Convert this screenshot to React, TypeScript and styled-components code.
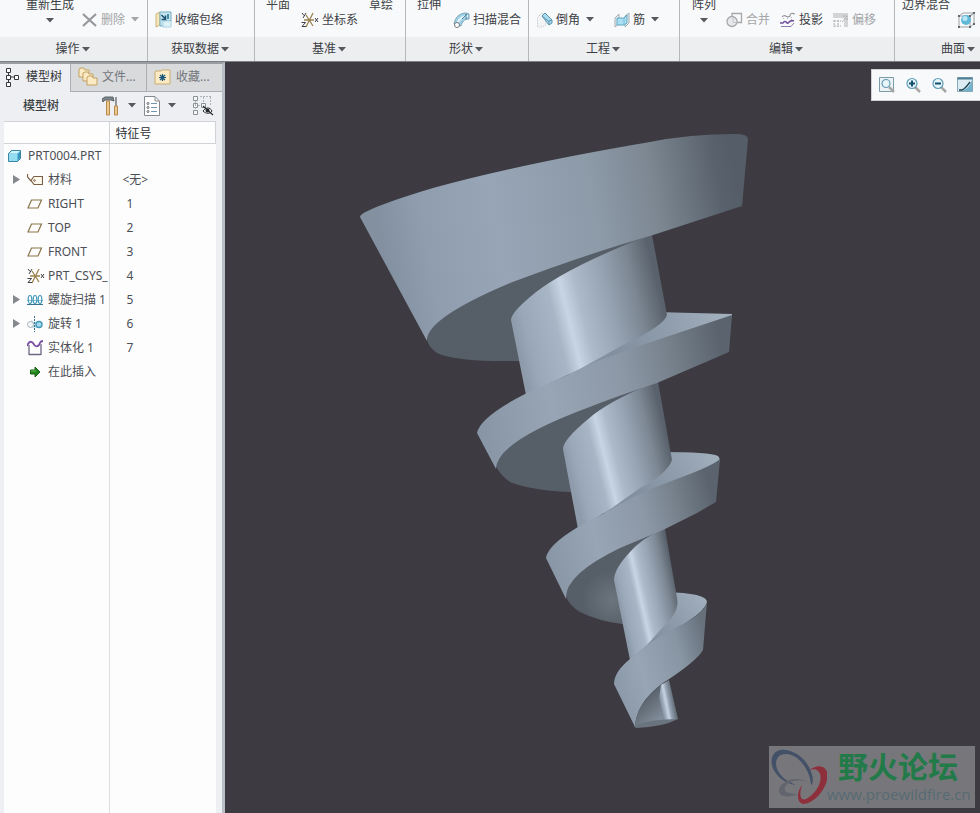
import React from "react";
import styled, { createGlobalStyle } from "styled-components";

const GlobalStyle = createGlobalStyle`
  * { box-sizing: border-box; }
  body {
    margin: 0;
    font-family: "Noto Sans", "Noto Sans CJK SC", sans-serif;
    font-size: 12px;
    line-height: 18px;
    color: #3c3f45;
    background: #3d3b41;
  }
  button { font: inherit; color: inherit; border: 0; padding: 0; background: none; white-space: nowrap; }
`;

/* ---------- layout ---------- */

const Page = styled.div`
  display: flex;
  flex-direction: column;
  min-height: 100vh;
  overflow: hidden;
`;

const Ribbon = styled.header`
  display: grid;
  grid-template-columns: 148fr 107fr 151fr 123fr 151fr 215fr 85fr;
  border-bottom: 1px solid #7d8086;
  background: #f8f9fa;
`;

const Group = styled.section`
  min-width: 0;
  overflow: hidden;
  border-right: 1px solid #b4b7bc;
  &:last-child { border-right: 0; }
`;

const GroupBody = styled.div<{ $start: number; $gap: number }>`
  display: flex;
  align-items: flex-end;
  gap: ${(p) => p.$gap}px;
  height: 37px;
  padding-left: ${(p) => p.$start}px;
  overflow: hidden;
`;

const GroupTitle = styled.button<{ $wide?: boolean }>`
  display: flex;
  align-items: center;
  justify-content: center;
  gap: 2px;
  width: ${(p) => (p.$wide ? "128px" : "100%")};
  height: 24px;
  padding-right: 2px;
  background: #edeef0;
`;

const TitleBar = styled.div`
  background: #edeef0;
`;

const TallButton = styled.button`
  display: flex;
  flex: none;
  flex-direction: column;
  align-items: center;
  gap: 4px;
  height: 41px;
`;

const SmallButton = styled.button<{ $muted?: boolean }>`
  display: flex;
  flex: none;
  align-items: center;
  gap: 3px;
  height: 36px;
  padding-top: 1px;
  color: ${(p) => (p.$muted ? "#a3a5a8" : "#3c3f45")};
`;

const Main = styled.main`
  display: flex;
  flex: 1;
`;

const Side = styled.aside`
  display: flex;
  flex: none;
  flex-direction: column;
  width: 225px;
  border-top: 2px solid #9b9ea1;
  border-right: 3px solid #b9bec7;
  background: #edeff2;
`;

const Tabs = styled.div`
  display: grid;
  grid-template-columns: 70px 76px 76px;
  height: 28px;
`;

const Tab = styled.button<{ $active?: boolean }>`
  display: flex;
  align-items: center;
  gap: ${(p) => (p.$active ? 5 : 4)}px;
  padding-left: ${(p) => (p.$active ? 5 : 7)}px;
  padding-bottom: ${(p) => (p.$active ? 3 : 2)}px;
  color: ${(p) => (p.$active ? "#33363b" : "#73767b")};
  background: ${(p) => (p.$active ? "#edeff2" : "#d8dadc")};
  border: solid #abaeb2;
  border-width: ${(p) => (p.$active ? "0" : "0 0 1px 1px")};
`;

const TreeBar = styled.div`
  display: flex;
  align-items: center;
  height: 29px;
  padding: 0 8px 2px 23px;
`;

const TreeTitle = styled.h2`
  flex: 1;
  margin: 0;
  font-size: 12px;
  font-weight: 500;
`;

const BarTools = styled.div`
  display: flex;
  align-items: center;
  gap: 8px;
`;

const TreeTable = styled.table`
  flex: 1;
  width: 212px;
  margin-left: 4px;
  height: 692px;
  table-layout: fixed;
  border-collapse: collapse;
  background: #fdfdfe;
  color: #4c4f55;

  th {
    height: 22px;
    padding: 2px 6px 0;
    line-height: 16px;
    border: solid #cfd2d6;
    border-width: 1px 1px 1px 0;
    text-align: left;
    font-weight: 400;
    color: #2d3035;
  }
  td { padding: 0; overflow: hidden; white-space: nowrap; }
  td:first-child { border-right: 1px solid #dcdee1; }
  td:nth-child(2) { padding-left: 17px; }
`;

const NameCol = styled.col`
  width: 105px;
`;

const Row = styled.tr`
  height: 24px;
`;

const SpecialValue = styled.span`
  margin-left: -4px;
`;

const NodeCell = styled.div<{ $root?: boolean }>`
  display: flex;
  align-items: center;
  gap: 4px;
  padding-left: ${(p) => (p.$root ? 4 : 9)}px;
`;

const Toggle = styled.span`
  flex: none;
  width: 8px;
  height: 18px;
  margin-right: 2px;
  display: flex;
  align-items: center;
`;

const Viewport = styled.section`
  position: relative;
  flex: 1;
  min-width: 0;
  overflow: hidden;
  background: #3d3b41;
`;

const Scene = styled.svg`
  display: block;
`;

const FloatBar = styled.div`
  position: absolute;
  top: 7px;
  right: 0;
  display: flex;
  align-items: center;
  gap: 10px;
  height: 32px;
  padding: 0 7px;
  background: #f8f9fb;
  border: 1px solid #cfd1d5;
  border-right: 0;
`;

const Watermark = styled.div`
  position: absolute;
  right: 5px;
  bottom: 5px;
  display: flex;
  width: 206px;
  height: 62px;
  background: #77777b;
`;

const WatermarkText = styled.div`
  display: flex;
  flex-direction: column;
  align-items: flex-start;
  white-space: nowrap;
`;

const WatermarkName = styled.strong`
  padding-left: 11px;
  font-family: "Noto Sans CJK SC", sans-serif;
  font-size: 30px;
  line-height: 38px;
  font-weight: 700;
  color: #237a49;
`;

const WatermarkUrl = styled.span`
  font-family: "Open Sans", "Noto Sans", sans-serif;
  font-size: 15px;
  line-height: 20px;
  color: #566a72;
`;

const IconSvg = styled.svg`
  display: block;
  flex: none;
`;

/* ---------- icons ---------- */

type IconProps = { children: React.ReactNode; w?: number; h?: number };
const Icon = ({ children, w = 16, h = 16 }: IconProps) => (
  <IconSvg width={w} height={h} viewBox={`0 0 ${w} ${h}`} fill="none" aria-hidden="true">
    {children}
  </IconSvg>
);

const Caret = ({ muted }: { muted?: boolean }) => (
  <Icon w={8} h={5}>
    <path d="M0 0H8L4 4.5Z" fill={muted ? "#a3a5a8" : "#55585d"} />
  </Icon>
);

const DeleteIcon = () => (
  <Icon>
    <path d="M1 2L14 14M14 2L1 14" stroke="#96989b" strokeWidth="2.2" />
  </Icon>
);

const ShrinkIcon = () => (
  <Icon w={17} h={17}>
    <path d="M1 3L5 1V14L1 16Z" fill="#f6e6b8" stroke="#cfb47c" />
    <path d="M5 1H16V10H10V15H5Z" fill="#c6e6f0" stroke="#72abc0" />
    <path d="M8 10H16V16H8Z" fill="#def1f7" stroke="#a6d2e0" />
    <path d="M6.500 4L10 7.500M10.500 4.500V8.500H6.500" stroke="#1c4f70" strokeWidth="1.500" />
    <path d="M13 3V8" stroke="#1b6f91" strokeWidth="1.500" />
  </Icon>
);

const CsysIcon = () => (
  <Icon w={18}>
    <path d="M3 8H13M5 3L12 14M12 1L5 15" stroke="#9a8250" strokeWidth="1.300" />
    <path d="M1 1L3 3.500M5 1L2 6M0.500 10.500H4.500L1 14.500H5M14 6L17 10M17 6L14 10" stroke="#3d4045" />
  </Icon>
);

const SweepIcon = () => (
  <Icon w={17}>
    <path d="M1 12C2 6 6 1 13 1L16 2V7C11 7 9 10 8 14Z" fill="#9fd2e8" stroke="#7ba3b6" />
    <path d="M5 10C7 6 10 4 15 4" stroke="#eaf7fc" strokeWidth="2" />
    <path d="M9 7L14 2M13 2V7" stroke="#4d8098" />
    <circle cx="4" cy="13" r="2.500" fill="#fff" stroke="#777c82" />
  </Icon>
);

const ChamferIcon = () => (
  <Icon>
    <path d="M0.500 5.500L4 1.500H9V13L5 15H0.500Z" fill="#f1f3f5" stroke="#c3c8cd" strokeDasharray="1 1" />
    <path d="M5 4L8 1L15 8V11L12 13Z" fill="#a9dcf0" stroke="#5b93ab" />
    <path d="M12 13V9L15 8M5 4L12 9.500" stroke="#5b93ab" />
  </Icon>
);

const RibIcon = () => (
  <Icon>
    <path d="M1 6L5 2V12L1 15ZM11 4L15 1V11L11 15Z" fill="#eef2f4" stroke="#a3acb2" />
    <path d="M3 6H10L13 3V11L10 13H3Z" fill="#a9e0f4" stroke="#5fa4bf" />
    <path d="M10 6V13" stroke="#76bcd6" />
  </Icon>
);

const MergeIcon = () => (
  <Icon w={17}>
    <path d="M6 5V1.500H15.500V10.500H11" stroke="#a6a8ab" strokeWidth="1.300" />
    <circle cx="6" cy="9.500" r="5" fill="#e8e9eb" stroke="#a6a8ab" strokeWidth="1.300" />
    <path d="M7 5.500V10.500H11" stroke="#c3c5c8" />
  </Icon>
);

const ProjectIcon = () => (
  <Icon>
    <path d="M2 5C5 1 7 7 10 4C10 1 12 1 15 2" stroke="#98999e" strokeWidth="1.200" />
    <path d="M3.500 6V8M7.500 6V8M11.500 5V8" stroke="#b6b8bc" strokeDasharray="1 1" />
    <path d="M0 11H3C4 9 6 9 7 11C9 12 9 7 14 9" stroke="#70529d" strokeWidth="1.600" />
    <path d="M1 14.500H11L14 11" stroke="#8f79b1" />
  </Icon>
);

const OffsetIcon = () => (
  <Icon>
    <path d="M0 1H15V15H11V6H0Z" fill="#d2d4d5" />
    <path d="M1 8V15M1 9H8M5 8V15M1 14H8M9 10L14 4M10 4H14V8" stroke="#a9abae" strokeDasharray="2 1" />
  </Icon>
);

const StyleCubeIcon = () => (
  <Icon w={17}>
    <path d="M1 4L5 1H16L12 4ZM12 4L16 1V12L12 15M1 4V15H12V4" stroke="#9da1a5" />
    <circle cx="8" cy="8" r="5" fill="#61b9da" />
    <circle cx="7" cy="6.500" r="2.500" fill="#b8e7f5" />
    <path d="M0 3H2V5H0ZM11 3H13V5H11ZM0 14H2V16H0ZM11 14H13V16H11ZM15 0H17V2H15ZM15 11H17V13H15Z" fill="#62676c" />
  </Icon>
);

const TreeIcon = () => (
  <Icon w={16} h={20}>
    <path d="M3.500 5V16M3.500 10H9" stroke="#33363a" />
    <path d="M1.500 1.500H5.500V5.500H1.500ZM1.500 8.500H5.500V12.500H1.500ZM1.500 15.500H5.500V19.500H1.500ZM9.500 8.500H13.500V12.500H9.500Z" fill="#fff" stroke="#33363a" />
  </Icon>
);

const FoldersIcon = () => (
  <Icon w={20} h={20}>
    {[0, 4, 8].map((o) => (
      <path key={o} d={`M${o + 1} ${o + 10}V${o + 2}L${o + 3} ${o + 1}H${o + 6}L${o + 7} ${o + 3}H${o + 11}V${o + 10}Z`} fill="#fbeac3" stroke="#c3a265" />
    ))}
  </Icon>
);

const FavoritesIcon = () => (
  <Icon w={18}>
    <path d="M1 15V3L2 2H7L8 1H16V15Z" fill="#fbeac3" stroke="#c9ac72" />
    <path d="M8.500 5V12M5 8.500H12M6 6L11 11M11 6L6 11" stroke="#18567a" strokeWidth="1.200" />
  </Icon>
);

const ToolsIcon = () => (
  <Icon w={18} h={20}>
    <path d="M0 3L3 1H11L12 5L9 4H3L1 6Z" fill="#7f878c" stroke="#5d6468" />
    <path d="M4.500 5H7.500V19H4.500Z" fill="#ecc98b" stroke="#b68a4e" />
    <path d="M14 1V10" stroke="#737a80" strokeWidth="1.500" />
    <path d="M12.500 10H15.500V19H12.500Z" fill="#ecc98b" stroke="#b68a4e" />
  </Icon>
);

const SheetIcon = () => (
  <Icon w={16} h={20}>
    <path d="M0.500 0.500H11L15.500 5V19.500H0.500Z" fill="#fff" stroke="#858b91" />
    <path d="M11 1V5H15" stroke="#858b91" />
    <path d="M7 7.500H13M7 11.500H13M7 15.500H13" stroke="#6f97af" />
    <circle cx="4" cy="7.500" r="1" stroke="#60666c" />
    <circle cx="4" cy="11.500" r="1" stroke="#60666c" />
    <circle cx="4" cy="15.500" r="1" stroke="#60666c" />
  </Icon>
);

const TreeFilterIcon = () => (
  <Icon w={22} h={20}>
    <path d="M1.500 0.500H5.500V4.500H1.500ZM1.500 7.500H5.500V11.500H1.500ZM1.500 14.500H5.500V18.500H1.500ZM9.500 7.500H13.500V11.500H9.500Z" fill="#f6f7f8" stroke="#8b9095" />
    <path d="M3.500 5V14M6 9.500H9M8 0.500H19M11.500 1V7M18.500 1V9" stroke="#b0b4b8" strokeDasharray="2 1" />
    <path d="M11 15C14 11 18 11 20 15C18 18 14 18 11 15Z" fill="#fff" stroke="#26292d" />
    <circle cx="15.500" cy="14.500" r="2" fill="#26292d" />
    <path d="M11 10L21 19" stroke="#26292d" strokeWidth="1.200" />
  </Icon>
);

const PartIcon = () => (
  <Icon>
    <path d="M0.500 5.500L3.500 2.500H12.500V10.500L9.500 13.500H0.500Z" fill="#61bfdf" stroke="#3d83a3" />
    <path d="M1 6H9V13H1Z" fill="#95def2" />
    <path d="M1 5.500L4 3H12L9 5.500Z" fill="#d1f5fc" />
    <path d="M10 6L12 4V10L10 12Z" fill="#3c95ba" />
  </Icon>
);

const MaterialIcon = () => (
  <Icon>
    <path d="M0.500 2V5L4 9" stroke="#7c6045" strokeWidth="1.200" />
    <path d="M7 4.500H15.500V12.500H7L4 8.500Z" fill="#fffaf0" stroke="#7c6045" strokeWidth="1.200" />
    <circle cx="7.500" cy="8.500" r="0.800" stroke="#7c6045" />
  </Icon>
);

const PlaneIcon = () => (
  <Icon>
    <path d="M4.500 4H14.500L11 12H1Z" stroke="#8b7448" strokeWidth="1.200" />
  </Icon>
);

const HelixIcon = () => (
  <Icon>
    <path d="M0 8.500H16" stroke="#8cc4d6" />
    {[3, 8, 13].map((x) => (
      <ellipse key={x} cx={x} cy="7.500" rx="1.800" ry="4" stroke="#4199b9" strokeWidth="1.200" />
    ))}
    <path d="M0 12.500H16" stroke="#3b7390" />
  </Icon>
);

const RevolveIcon = () => (
  <Icon>
    <path d="M4 4L8 6L12 5V12H5Z" fill="#c9eaf4" />
    <circle cx="3.500" cy="8.500" r="3" fill="#f3f6f8" stroke="#aab1b8" />
    <circle cx="12" cy="8.500" r="3" fill="#a6dcef" stroke="#4297b7" strokeWidth="1.400" />
    <path d="M7.500 0V16" stroke="#3d6f8c" strokeDasharray="2 1" />
  </Icon>
);

const SolidifyIcon = () => (
  <Icon>
    <path d="M2 15V5M14 4V15M2 14.500H14" stroke="#716785" strokeWidth="1.300" />
    <path d="M0 6C2 1 4 1 6 3C8 7 10 7 12 5C13 3 13 1 16 1" stroke="#7c50a2" strokeWidth="1.800" />
  </Icon>
);

const InsertIcon = () => (
  <Icon>
    <path d="M3.500 6H8V3L13 8L8 13V10H3.500Z" fill="#218421" stroke="#176317" />
    <path d="M4 7H9" stroke="#68bd49" />
  </Icon>
);

const ZoomIcon = ({ kind }: { kind: "fit" | "in" | "out" }) => (
  <Icon>
    {kind === "fit" && <path d="M0.500 0.500H14.500V14.500H0.500Z" fill="#edf3f5" stroke="#7d9aa9" />}
    <path d="M10 10L15 15" stroke="#a9a7a4" strokeWidth="2.500" />
    <circle cx="7" cy="6.500" r={kind === "fit" ? 4 : 5} fill="#e8f6fa" stroke="#5f9cb8" strokeWidth="1.200" />
    {kind !== "fit" && <path d={kind === "in" ? "M4 6.500H10M7 3.500V9.500" : "M4 6.500H10"} stroke="#124f70" strokeWidth="2" />}
  </Icon>
);

const RepaintIcon = () => (
  <Icon>
    <path d="M0.500 0.500H15.500V14.500H0.500Z" fill="#dcecf2" stroke="#86a8b8" />
    <path d="M0.500 1.500H15.500" stroke="#4f7f95" strokeWidth="2" />
    <path d="M15 3V14H5C10 12 13 9 15 3Z" fill="#6fb2c9" />
    <path d="M2 13H5C8 12 10 9 13 5" stroke="#193f52" strokeWidth="1.500" />
  </Icon>
);

const LogoMark = () => (
  <Icon w={58} h={62}>
    <path d="M42 38C41 25 30 8 17 8C7 8 5 17 9 25C13 32 19 36 27 39C11 37 0 22 3 12C7 -3 31 4 40 21C43 27 45 33 43 39Z" fill="#435168" />
    <path d="M41 24C50 16 62 22 58 34C55 47 43 58 34 58C26 55 29 44 33 39C30 49 31 55 37 53C48 48 56 31 49 25C47 23 44 23 41 24Z" fill="#8e303b" />
    <path d="M37 36C26 28 9 37 10 45C10 51 19 52 30 48C20 48 14 46 16 41C20 34 30 33 37 36Z" fill="#62656e" />
  </Icon>
);

/* ---------- ribbon ---------- */

const Title = ({ text, wide }: { text: string; wide?: boolean }) => (
  <TitleBar>
    <GroupTitle type="button" $wide={wide}>
      {text}
      <Caret />
    </GroupTitle>
  </TitleBar>
);

const Tall = ({ text, caret }: { text: string; caret?: boolean }) => (
  <TallButton type="button">
    {text}
    {caret && <Caret />}
  </TallButton>
);

type SmallProps = { icon: React.ReactNode; text?: string; muted?: boolean; caret?: boolean };
const Small = ({ icon, text, muted, caret }: SmallProps) => (
  <SmallButton type="button" $muted={muted} disabled={muted} aria-label={text ? undefined : "曲面工具"}>
    {icon}
    {text && <span>{text}</span>}
    {caret && (
      <>
        <span />
        <Caret muted={muted} />
      </>
    )}
  </SmallButton>
);

const RibbonBar = () => (
  <Ribbon>
    <Group>
      <GroupBody $start={26} $gap={8}>
        <Tall text="重新生成" caret />
        <Small icon={<DeleteIcon />} text="删除" muted caret />
      </GroupBody>
      <Title text="操作" />
    </Group>
    <Group>
      <GroupBody $start={7} $gap={8}>
        <Small icon={<ShrinkIcon />} text="收缩包络" />
      </GroupBody>
      <Title text="获取数据" />
    </Group>
    <Group>
      <GroupBody $start={11} $gap={11}>
        <Tall text="平面" />
        <Small icon={<CsysIcon />} text="坐标系" />
        <Tall text="草绘" />
      </GroupBody>
      <Title text="基准" />
    </Group>
    <Group>
      <GroupBody $start={11} $gap={12}>
        <Tall text="拉伸" />
        <Small icon={<SweepIcon />} text="扫描混合" />
      </GroupBody>
      <Title text="形状" />
    </Group>
    <Group>
      <GroupBody $start={8} $gap={20}>
        <Small icon={<ChamferIcon />} text="倒角" caret />
        <Small icon={<RibIcon />} text="筋" caret />
      </GroupBody>
      <Title text="工程" />
    </Group>
    <Group>
      <GroupBody $start={12} $gap={10}>
        <Tall text="阵列" caret />
        <Small icon={<MergeIcon />} text="合并" muted />
        <Small icon={<ProjectIcon />} text="投影" />
        <Small icon={<OffsetIcon />} text="偏移" muted />
      </GroupBody>
      <Title text="编辑" />
    </Group>
    <Group>
      <GroupBody $start={7} $gap={8}>
        <Tall text="边界混合" />
        <Small icon={<StyleCubeIcon />} />
      </GroupBody>
      <Title text="曲面" wide />
    </Group>
  </Ribbon>
);

/* ---------- model tree ---------- */

type Feature = { name: string; id: string; icon: React.ReactNode; branch?: boolean };
const features: Feature[] = [
  { name: "材料", id: "<无>", icon: <MaterialIcon />, branch: true },
  { name: "RIGHT", id: "1", icon: <PlaneIcon /> },
  { name: "TOP", id: "2", icon: <PlaneIcon /> },
  { name: "FRONT", id: "3", icon: <PlaneIcon /> },
  { name: "PRT_CSYS_", id: "4", icon: <CsysIcon /> },
  { name: "螺旋扫描 1", id: "5", icon: <HelixIcon />, branch: true },
  { name: "旋转 1", id: "6", icon: <RevolveIcon />, branch: true },
  { name: "实体化 1", id: "7", icon: <SolidifyIcon /> },
  { name: "在此插入", id: "", icon: <InsertIcon /> },
];

const IconSlot = styled.span`
  flex: none;
  width: 17px;
`;

const ModelTree = () => (
  <Side>
    <Tabs>
      <Tab type="button" $active><TreeIcon />模型树</Tab>
      <Tab type="button"><FoldersIcon />文件...</Tab>
      <Tab type="button"><FavoritesIcon />收藏...</Tab>
    </Tabs>
    <TreeBar>
      <TreeTitle>模型树</TreeTitle>
      <BarTools>
        <ToolsIcon />
        <Caret />
        <SheetIcon />
        <Caret />
        <span />
        <TreeFilterIcon />
      </BarTools>
    </TreeBar>
    <TreeTable>
      <colgroup>
        <NameCol />
        <col />
      </colgroup>
      <thead>
        <tr>
          <th aria-label="名称" />
          <th>特征号</th>
        </tr>
      </thead>
      <tbody>
        <Row>
          <td><NodeCell $root><PartIcon />PRT0004.PRT</NodeCell></td>
          <td />
        </Row>
        {features.map((f) => (
          <Row key={f.name}>
            <td>
              <NodeCell>
                <Toggle>
                  {f.branch && (
                    <Icon w={8} h={9}><path d="M0 0L7 4.500L0 9Z" fill="#85888e" /></Icon>
                  )}
                </Toggle>
                <IconSlot>{f.icon}</IconSlot>
                {f.name}
              </NodeCell>
            </td>
            <td>{f.id.startsWith("<") ? <SpecialValue>{f.id}</SpecialValue> : f.id}</td>
          </Row>
        ))}
        <tr><td /><td /></tr>
      </tbody>
    </TreeTable>
  </Side>
);

/* ---------- 3D scene ---------- */

type Stops = [number, string][];
type GradientProps = { id: string; x1: number; y1: number; x2: number; y2: number; stops: Stops };
const Gradient = ({ id, x1, y1, x2, y2, stops }: GradientProps) => (
  <linearGradient id={id} gradientUnits="userSpaceOnUse" x1={x1} y1={y1} x2={x2} y2={y2}>
    {stops.map(([o, c]) => <stop key={o} offset={o} stopColor={c} />)}
  </linearGradient>
);

const shaftStops: Stops = [
  [0, "#8e9bab"], [0.08, "#9aa7b8"], [0.28, "#a8b5c5"], [0.37, "#c8d5e5"], [0.47, "#adbac9"],
  [0.65, "#97a4b3"], [0.84, "#7c8793"], [1, "#59626c"],
];
const bandStops: Stops = [
  [0, "#8390a0"], [0.12, "#909dae"], [0.32, "#98a5b6"], [0.6, "#8d9aa8"], [0.77, "#7c8792"],
  [0.95, "#59626c"], [1, "#555e68"],
];
const bandStopsLow: Stops = [
  [0, "#8895a5"], [0.3, "#98a5b5"], [0.6, "#8c98a6"], [0.8, "#75808b"], [1, "#5b646e"],
];
const ledgeStops: Stops = [[0, "#8390a0"], [0.5, "#909dac"], [1, "#a1aebc"]];

const DARK = "#565e68";

const Screw = () => (
  <Scene width="755" height="751" viewBox="225 62 755 751" role="img" aria-label="螺旋扫描模型">
    <defs>
      <Gradient id="band1" x1={385} y1={262} x2={740} y2={200} stops={bandStops} />
      <Gradient id="band2" x1={480} y1={440} x2={730} y2={392} stops={bandStopsLow} />
      <Gradient id="band3" x1={548} y1={570} x2={720} y2={525} stops={bandStopsLow} />
      <Gradient id="band4" x1={615} y1={690} x2={714} y2={660} stops={[[0, "#8b98a8"], [0.3, "#98a5b5"], [0.7, "#8895a3"], [1, "#66717c"]]} />
      <Gradient id="shaft1" x1={511} y1={317} x2={657} y2={281} stops={shaftStops} />
      <Gradient id="shaft2" x1={563} y1={447} x2={663} y2={422} stops={shaftStops} />
      <Gradient id="shaft3" x1={614} y1={580} x2={672} y2={567} stops={shaftStops} />
      <Gradient id="shaft4" x1={658} y1={701} x2={673} y2={698} stops={[[0, "#687380"], [0.3, "#9eabbb"], [0.5, "#c6d3e2"], [0.7, "#929eae"], [1, "#65707b"]]} />
      <Gradient id="ledge2" x1={620} y1={350} x2={720} y2={314} stops={ledgeStops} />
      <Gradient id="ledge3" x1={640} y1={495} x2={715} y2={456} stops={ledgeStops} />
      <Gradient id="ledge4" x1={655} y1={640} x2={704} y2={597} stops={ledgeStops} />
      <Gradient id="tip" x1={638} y1={705} x2={655} y2={725} stops={[[0, "#5b646e"], [1, "#828e9b"]]} />
      <radialGradient id="under3" gradientUnits="userSpaceOnUse" cx="612" cy="600" r="30">
        <stop offset="0" stopColor="#6c757e" />
        <stop offset="1" stopColor={DARK} />
      </radialGradient>
    </defs>

    {/* undersides of the thread */}
    <path d="M427 338Q427 346 437 353Q453 360 493 361H530L648 236V220H440L420 315Z" fill={DARK} />
    <path d="M496 466Q499 474 510 482Q530 490 569 492H590L655 383V365L560 390L492 450Z" fill={DARK} />
    <path d="M566 597Q570 606 580 612Q598 621 622 624H640L662 529V510L590 540L562 585Z" fill="url(#under3)" />

    {/* upper faces of the thread */}
    <path d="M655 312L732 314V316L617 360L570 380L560 340Z" fill="url(#ledge2)" />
    <path d="M660 452Q710 452 718 456Q722 460 716 466L645 500L605 520L600 480Z" fill="url(#ledge3)" />
    <path d="M665 592Q707 593 707 602Q705 610 690 620L640 655L635 620Z" fill="url(#ledge4)" />

    {/* shaft */}
    <path d="M650 235V226L652 235L667 315Q664 326 623 345L580 369L526 395L511 320Q511 313 530 297Q562 269 650 235Z" fill="url(#shaft1)" />
    <path d="M656 382V374L658 382L672 460Q667 474 640 488L612 508L578 529L563 449Q563 440 587 420Q608 401 656 382Z" fill="url(#shaft2)" />
    <path d="M663 529V520L665 529L677 598Q680 612 663 627L647 645L630 660L614 580Q614 569 630 552Q641 539 663 529Z" fill="url(#shaft3)" />

    {/* outer faces of the thread */}
    <path d="M360 217Q360 210 433 188Q520 164 650 142Q690 134 735 134Q748 134 748 139L742 206L650 236Q590 253 510 283Q425 319 427 341Z" fill="url(#band1)" />
    <path d="M477 433Q480 417 525 394L570 374Q585 366 600 360Q618 354 633 348L732 315L729 352L657 383Q620 395 587 408Q496 442 496 469Z" fill="url(#band2)" />
    <path d="M546 558Q548 545 578 527L610 510Q630 498 653 488L690 474Q715 464 720 459L716 502L697 513L663 530L620 548Q564 575 566 599Z" fill="url(#band3)" />
    <path d="M614 684Q614 672 630 659L650 643Q663 634 683 624Q704 613 707 602L703 650Q697 661 663 683Q636 703 635 727Z" fill="url(#band4)" />

    {/* tip */}
    <path d="M635 727Q636 703 662 684L660 697L665 721Z" fill="url(#tip)" />
    <path d="M661 685L669 680L678 719L664 722L659 698Z" fill="url(#shaft4)" />
    <path d="M634 726Q650 719 678 719Q663 727 636 728Z" fill="#69747f" />
  </Scene>
);

export default function App() {
  return (
    <Page>
      <GlobalStyle />
      <RibbonBar />
      <Main>
        <ModelTree />
        <Viewport>
          <Screw />
          <FloatBar>
            <button type="button" aria-label="重新调整"><ZoomIcon kind="fit" /></button>
            <button type="button" aria-label="放大"><ZoomIcon kind="in" /></button>
            <button type="button" aria-label="缩小"><ZoomIcon kind="out" /></button>
            <button type="button" aria-label="重画"><RepaintIcon /></button>
          </FloatBar>
          <Watermark>
            <LogoMark />
            <WatermarkText>
              <WatermarkName>野火论坛</WatermarkName>
              <WatermarkUrl>www.proewildfire.cn</WatermarkUrl>
            </WatermarkText>
          </Watermark>
        </Viewport>
      </Main>
    </Page>
  );
}
